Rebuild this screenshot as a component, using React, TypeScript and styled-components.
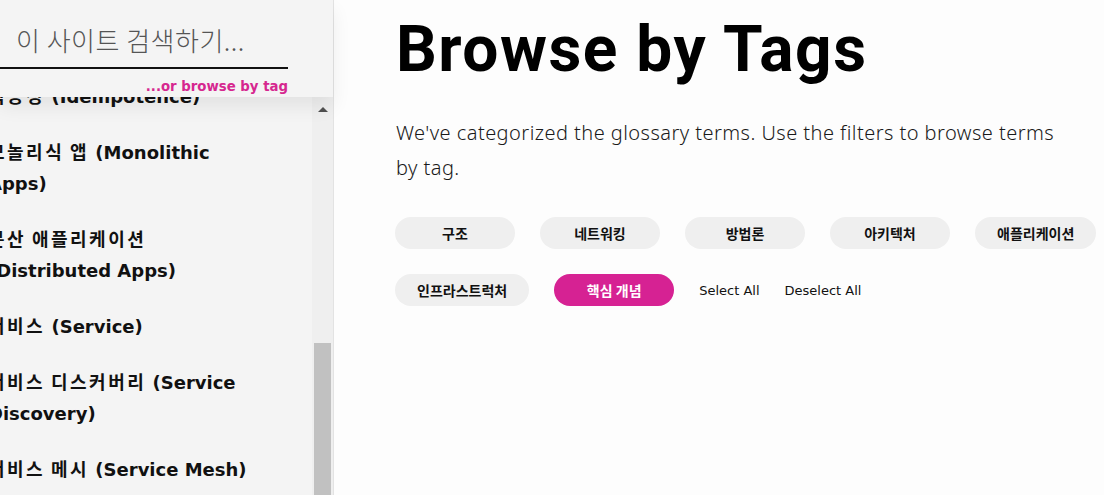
import React from "react";
import styled, { createGlobalStyle } from "styled-components";

const GlobalStyle = createGlobalStyle`
  html, body {
    margin: 0;
    padding: 0;
    height: 100%;
  }
  body {
    background: #fdfdfd;
    color: #111;
    font-family: Roboto, "Noto Sans CJK KR", sans-serif;
    overflow: hidden;
  }
  #root {
    height: 100%;
  }
`;

const Page = styled.div`
  display: flex;
  height: 100vh;
  overflow: hidden;
`;

const Sidebar = styled.aside`
  flex: 0 0 auto;
  width: 333px;
  min-width: 0;
  display: flex;
  flex-direction: column;
  background: #f4f4f4;
  border-right: 1px solid #e3e3e3;
`;

const SearchHeader = styled.div`
  position: relative;
  z-index: 1;
  height: 97px;
  box-sizing: border-box;
  padding: 18px 45px 0 0;
  display: flex;
  flex-direction: column;
  background: #f4f4f4;
  box-shadow: 0 10px 18px rgba(0, 0, 0, 0.07);
`;

const SearchInput = styled.input`
  width: 100%;
  height: 51px;
  box-sizing: border-box;
  padding: 0 0 6px 16px;
  border: 0;
  border-bottom: 2px solid #111;
  background: transparent;
  font: 300 26px "Noto Sans CJK KR", sans-serif;
  letter-spacing: 0.5px;
  color: #555;
  outline: none;

  &::placeholder {
    color: #555;
  }
`;

const BrowseLink = styled.a`
  align-self: flex-end;
  margin-top: 9px;
  font: 700 13.3px/17px "DejaVu Sans", "Noto Sans CJK KR", sans-serif;
  color: #d6278f;
  text-decoration: none;
`;

const SidebarBody = styled.div`
  flex: 1;
  display: flex;
  min-height: 0;
`;

const TermList = styled.ul`
  flex: 1;
  min-width: 0;
  list-style: none;
  margin: -16px 0 0 -12px;
  padding: 0;
  overflow: hidden;
`;

const Term = styled.li`
  max-width: 277px;
  margin-bottom: 25px;
  font: 700 18px/31px "DejaVu Sans", "Noto Sans CJK KR", sans-serif;
  color: #111;
  word-break: keep-all;
`;

const KoreanName = styled.span`
  letter-spacing: 2.5px;
  word-spacing: -3px;
`;

const ScrollTrack = styled.div`
  flex: 0 0 21px;
  display: flex;
  flex-direction: column;
  align-items: center;
  background: #efefef;
`;

const ScrollArrow = styled.div`
  width: 0;
  height: 0;
  margin-top: 10px;
  border-left: 5px solid transparent;
  border-right: 5px solid transparent;
  border-bottom: 5px solid #505050;
`;

const ScrollThumb = styled.div`
  width: 17px;
  flex: 1;
  margin-top: 231px;
  background: #c1c1c1;
`;

const Main = styled.main`
  flex: 1;
  min-width: 0;
  padding: 15px 2px 0 62px;
`;

const Title = styled.h1`
  margin: 0;
  font: 700 64px/1.1 Roboto, sans-serif;
  letter-spacing: 1.5px;
  color: #000;
`;

const Intro = styled.p`
  max-width: 672px;
  margin: 30px 0 0;
  font: 300 20px/35px "Noto Sans", Roboto, sans-serif;
  letter-spacing: 0.45px;
  color: #1a1a1a;
`;

const TagGrid = styled.div`
  display: flex;
  flex-wrap: wrap;
  align-items: center;
  gap: 25px;
  margin: 32px 0 0 -1px;
`;

const TagButton = styled.button<{ $active?: boolean }>`
  min-width: 120px;
  height: 32px;
  padding: 0 22px;
  border: 0;
  border-radius: 16px;
  background: ${({ $active }) => ($active ? "#d62293" : "#efefef")};
  color: ${({ $active }) => ($active ? "#fff" : "#111")};
  font: 700 14px "Noto Sans CJK KR", sans-serif;
  cursor: pointer;
`;

const TextButton = styled.button`
  padding: 0;
  border: 0;
  background: none;
  font: 400 13px "DejaVu Sans", sans-serif;
  color: #111;
  cursor: pointer;
`;

const terms = [
  { ko: "멱등성", en: "Idempotence" },
  { ko: "모놀리식 앱", en: "Monolithic Apps" },
  { ko: "분산 애플리케이션", en: "Distributed Apps" },
  { ko: "서비스", en: "Service" },
  { ko: "서비스 디스커버리", en: "Service Discovery" },
  { ko: "서비스 메시", en: "Service Mesh" },
  { ko: "서비스 프록시", en: "Service Proxy" },
];

const tags = [
  { id: "structure", label: "구조" },
  { id: "networking", label: "네트워킹" },
  { id: "methodology", label: "방법론" },
  { id: "architecture", label: "아키텍처" },
  { id: "application", label: "애플리케이션" },
  { id: "infrastructure", label: "인프라스트럭처" },
  { id: "fundamental", label: "핵심 개념", active: true },
];

export default function App() {
  return (
    <>
      <GlobalStyle />
      <Page>
        <Sidebar>
          <SearchHeader>
            <SearchInput type="text" placeholder="이 사이트 검색하기..." />
            <BrowseLink href="#">...or browse by tag</BrowseLink>
          </SearchHeader>
          <SidebarBody>
            <TermList>
              {terms.map((term) => (
                <Term key={term.en}>
                  <KoreanName>{term.ko}</KoreanName> ({term.en})
                </Term>
              ))}
            </TermList>
            <ScrollTrack>
              <ScrollArrow />
              <ScrollThumb />
            </ScrollTrack>
          </SidebarBody>
        </Sidebar>
        <Main>
          <Title>Browse by Tags</Title>
          <Intro>
            We've categorized the glossary terms. Use the filters to browse terms by tag.
          </Intro>
          <TagGrid>
            {tags.map((tag) => (
              <TagButton key={tag.id} $active={tag.active}>
                {tag.label}
              </TagButton>
            ))}
            <TextButton>Select All</TextButton>
            <TextButton>Deselect All</TextButton>
          </TagGrid>
        </Main>
      </Page>
    </>
  );
}
